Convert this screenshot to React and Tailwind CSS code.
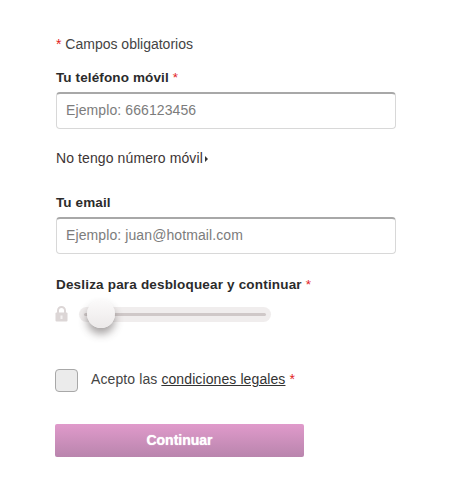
function Star() {
  return <span className="text-[#e2211c]">*</span>
}

function Field({ label, required, placeholder }) {
  return (
    <div>
      <label className="block h-[19px] text-[13.5px] leading-[19px] font-bold tracking-[0.12px] text-[#2b2b2b]">
        {label}
        {required && <span className="font-normal"> <Star /></span>}
      </label>
      <input
        type="text"
        placeholder={placeholder}
        className="mt-[5px] block h-[37px] w-[340px] rounded-[4px] border border-[#d8d8d8] border-t-2 border-t-[#a8a8a8] bg-white px-[9px] pb-[2px] text-[14px] tracking-[0.1px] text-[#333] outline-none placeholder:text-[#7c7c7c]"
      />
    </div>
  )
}

export default function App() {
  return (
    <div className="h-[479px] w-[460px] overflow-hidden bg-white pl-[56px] pt-[35px] font-['Liberation_Sans',Arial,sans-serif]">
      <p className="h-[18px] text-[14px] leading-[18px] text-[#444]">
        <Star /> Campos obligatorios
      </p>

      <div className="mt-[15px]">
        <Field label="Tu teléfono móvil" required placeholder="Ejemplo: 666123456" />
      </div>

      <p className="mt-[20px] flex h-[18px] items-center text-[14px] leading-[18px] tracking-[0.1px] text-[#3d3535]">
        No tengo número móvil
        <span className="ml-[2px] mt-[2px] h-0 w-0 border-y-[3px] border-l-[3px] border-y-transparent border-l-[#333]"></span>
      </p>

      <div className="mt-[26px]">
        <Field label="Tu email" placeholder="Ejemplo: juan@hotmail.com" />
      </div>

      <p className="mt-[21px] h-[19px] text-[13.5px] leading-[19px] font-bold tracking-[0.18px] text-[#2b2b2b]">
        Desliza para desbloquear y continuar <span className="font-normal"><Star /></span>
      </p>

      <div className="mt-[12px] flex h-[16px] items-center">
        <svg width="13" height="16" viewBox="0 0 13 16" className="-ml-[1px] shrink-0">
          <path d="M3 7V4.5a3.5 3.5 0 0 1 7 0V7" fill="none" stroke="#dcd6d6" strokeWidth="2" />
          <rect x="0.5" y="6.5" width="12" height="9" rx="1" fill="#dcd6d6" />
          <rect x="5.5" y="9.5" width="2" height="3.5" fill="#f4f1f1" />
        </svg>
        <div className="relative ml-[11px] flex h-[15px] w-[192px] items-center rounded-full bg-[#f0eded] px-[5px]">
          <div className="h-[3px] w-full rounded-full bg-[#cfc8c8]"></div>
          <div className="absolute left-[8px] top-1/2 h-[28px] w-[28px] -translate-y-1/2 rounded-full bg-gradient-to-b from-[#fbfafa] to-[#ece9e9] shadow-[0_6px_8px_rgba(60,50,50,0.45)]"></div>
        </div>
      </div>

      <div className="-ml-[1px] mt-[47px] flex h-[23px] items-start">
        <div className="h-[23px] w-[23px] rounded-[4px] border border-[#a8a8a8] bg-[#ebebeb]"></div>
        <p className="ml-[13px] text-[14px] leading-[20px] tracking-[0.1px] text-[#444]">
          Acepto las <a className="text-[#333] underline">condiciones legales</a> <Star />
        </p>
      </div>

      <button className="-ml-[1px] mt-[32px] block h-[33px] w-[249px] rounded-[2px] bg-gradient-to-b from-[#e09acb] to-[#b985ad] text-center text-[14px] font-bold text-white [text-shadow:0_0_1px_#fff]">
        Continuar
      </button>
    </div>
  )
}
